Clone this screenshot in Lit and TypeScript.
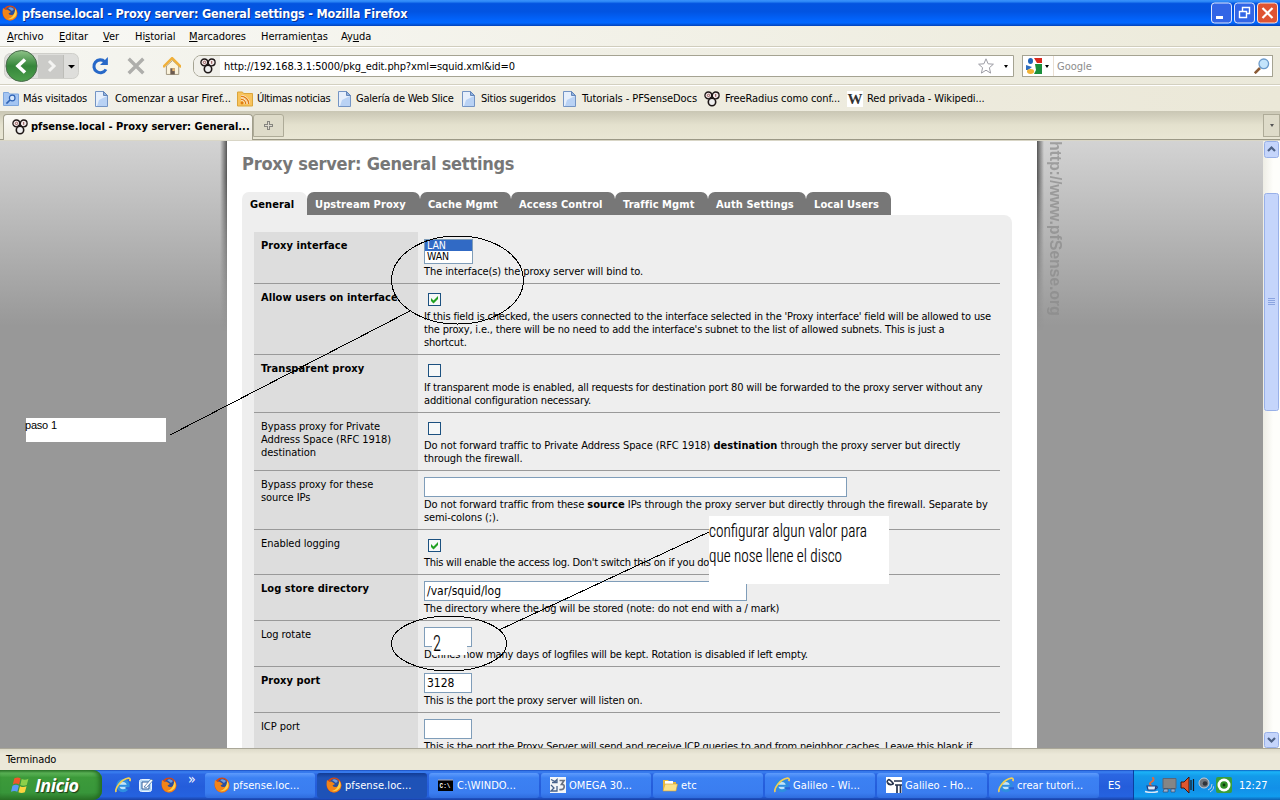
import {LitElement, css, html, svg, nothing} from 'lit';
import {customElement, property} from 'lit/decorators.js';
import {classMap} from 'lit/directives/class-map.js';

const icons: Record<string, unknown> = {
  firefox: svg`
    <circle cx="8" cy="8" r="7.5" fill="#d9480f"/>
    <circle cx="8.4" cy="6.6" r="4.8" fill="#2b4f9e"/>
    <path d="M6 3 Q9 1 12 4 L10 6 Z" fill="#6f9ee0"/>
    <path d="M1 3 L3.5 5 Q5 4 6.5 5.2 L9 7 L6.5 8.5 Q8 11 11.5 9.5 Q14 7.5 13 3 Q17 8 14 12.5 Q10 17 4.5 14.5 Q-.5 11 1 3Z" fill="#f28418"/>
    <path d="M13.4 4 Q15.8 8 13.4 11.6 Q10.5 15 6 14 Q12 13 13.4 4Z" fill="#fcd14a"/>`,
  pf: svg`
    <circle cx="4.3" cy="4.4" r="3.4" fill="#f3e9e9" stroke="#1d1616" stroke-width="1.3"/>
    <circle cx="11.7" cy="4.4" r="3.4" fill="#f3e9e9" stroke="#1d1616" stroke-width="1.3"/>
    <circle cx="8" cy="11" r="3.7" fill="#efefef" stroke="#1d1616" stroke-width="1.6"/>
    <circle cx="4.5" cy="4.4" r="1.2" fill="none" stroke="#8d4f4f" stroke-width=".9"/>
    <path d="M11.7 3v2.800" stroke="#8d4f4f"/>
    <path d="M6.4 7.2h3.2" stroke="#1d1616" stroke-width="1.4"/>`,
  page: svg`
    <path d="M1.5 .5h8l4 4v11h-12z" fill="#e6effb" stroke="#7394c4"/>
    <path d="M5 9l8-4v10H3z" fill="#b9d2f4"/>
    <path d="M9.5 .5v4h4z" fill="#8fb2e2" stroke="#6486b8"/>`,
  places: svg`
    <path d="M.5 1.500h5l1 1.500h9v11.500H.5z" fill="#a4c5f2" stroke="#7da6dd"/>
    <circle cx="9.2" cy="7" r="2.8" fill="#d8e8fb" stroke="#2f63b4" stroke-width="1.2"/>
    <path d="M7 9l-3.6 3.6" stroke="#2f63b4" stroke-width="1.6"/>`,
  rss: svg`
    <path d="M.5 1h5l1 1.500h9v12.500H.5z" fill="#f8c35c" stroke="#dba53a"/>
    <circle cx="5" cy="12" r="1.4" fill="#e07b12"/>
    <path d="M4 8.3a4.7 4.7 0 0 1 4.7 4.7M4 5.2a7.8 7.8 0 0 1 7.8 7.8" fill="none" stroke="#fff" stroke-width="2.400"/>
    <path d="M4 8.3a4.7 4.7 0 0 1 4.7 4.7M4 5.2a7.8 7.8 0 0 1 7.8 7.8" fill="none" stroke="#e07b12" stroke-width="1.500"/>`,
  wiki: svg`
    <rect width="16" height="16" fill="#fff"/>
    <text x="8" y="13.4" text-anchor="middle" font-family="Liberation Serif, serif" font-weight="bold" font-size="15" fill="#333">W</text>`,
  ie: svg`
    <circle cx="8" cy="8.6" r="5.2" fill="#bfe3fa" stroke="#2f8ee0" stroke-width="3"/>
    <path d="M4 8.8h9" stroke="#2f8ee0" stroke-width="2"/>
    <path d="M10 10.200h6v2.300h-4z" fill="#2a62d6"/>
    <path d="M1.2 15C-.6 12 6 2 13.5 1.2c2-.1 2 1.6 1.2 3" fill="none" stroke="#f3cf52" stroke-width="1.700"/>`,
  note: svg`
    <rect x="1.5" y="2.5" width="12" height="12" rx="2" fill="#b7d9f5" stroke="#e8f4ff"/>
    <path d="M4 5h7v7H4z" fill="#fff" stroke="#315f99"/>
    <path d="M6 10l7-8 2 1.5-6.5 7z" fill="#fff" stroke="#3f71a9" stroke-width=".8"/>`,
  cmd: svg`
    <rect y="3" width="15" height="11" fill="#000"/>
    <path d="M0 3h15" stroke="#aab"/>
    <text x="1.5" y="11" textLength="11" lengthAdjust="spacingAndGlyphs" font-family="Liberation Mono, monospace" font-weight="bold" font-size="7" fill="#fff">C:\\</text>`,
  omega: svg`
    <rect width="16" height="16" fill="#f4f6f8"/>
    <path d="M1 2.500l4 2 2-2v3H2M1 8l3 3-3 3h6V9" fill="none" stroke="#47628a" stroke-width="1.3"/>
    <path d="M9.500 3.500h4.500l-2.500 3.800q3.200 0 2.600 3-.6 3-4.800 2.200" fill="none" stroke="#6a7280" stroke-width="1.700"/>`,
  folder: svg`
    <path d="M1 3h5l1.5 2H14v9H1z" fill="#e9b93d"/>
    <path d="M3 4h8v3H3z" fill="#fff"/>
    <path d="M3 7h12.5L14 14H1z" fill="#fbe28a" stroke="#d59f2c" stroke-width=".6"/>`,
  galileo: svg`
    <rect width="16" height="16" fill="#fff"/>
    <path d="M1 5q1-4 4-1t2 3q-4 2-6-2M8 4h8M9 8h7M11 8v8M14.5 8v8" fill="none" stroke="#26334d" stroke-width="1.7"/>`,
  java: svg`
    <path d="M8.5 0Q11 3 7.5 5T8 9" fill="none" stroke="#e06a3f" stroke-width="2"/>
    <path d="M3 9h9l-1 4H4zM12 9.500q3 .5-.5 2.500" fill="#dfe8f6" stroke="#1c3f84" stroke-width="1.2"/>
    <path d="M1 14.500q6.500 2 13 0" fill="none" stroke="#dfe8f6" stroke-width="1.4"/>`,
  net: svg`
    <path d="M1 1.500h13v10H1z" fill="#858585" stroke="#5b6574"/>
    <path d="M2 12h4v3H1zM9 12h4v3H9z" fill="#9bb0cf" stroke="#33415c" stroke-width=".6"/>`,
  sound: svg`
    <path d="M1 5h3l5-5v16L4 11H1z" fill="#e0562e" stroke="#42160d"/>
    <path d="M11 3v10M13.500 2v12" stroke="#15181f" stroke-width="1.2"/>`,
  speaker: svg`
    <circle cx="6" cy="6" r="5" fill="#6f757d" stroke="#c9ced5"/>
    <circle cx="7" cy="6.500" r="2.300" fill="#30343a"/>
    <path d="M10 13q4-1 4-6M12 15q4-2 4-6" fill="none" stroke="#b8cfe8"/>`,
  eye: svg`
    <rect width="16" height="16" rx="2" fill="#3a9e3a"/>
    <circle cx="8" cy="8" r="6.500" fill="#fff"/>
    <circle cx="8" cy="8" r="3.800" fill="#2f8f24"/>
    <circle cx="8" cy="8" r="1.400" fill="#0c3a0c"/>`,
  reload: svg`
    <path d="M12.300 4.200A5.700 5.700 0 1 0 13.300 11" fill="none" stroke="#2768c8" stroke-width="2.700"/>
    <path d="M15 0v7H8z" fill="#2768c8"/>`,
  stop: svg`<path d="M1.500 1.500l13 13M14.500 1.500l-13 13" stroke="#aeaeab" stroke-width="3"/>`,
  home: svg`
    <path d="M3 8v7.500h11V8L8.500 3z" fill="#fbf3dc" stroke="#9a8f77" stroke-width=".8"/>
    <path d="M.5 9L8.500 1l8 8" transform="translate(-.4)" fill="none" stroke="#f0b03a" stroke-width="2.200"/>
    <path d="M6.500 10h4v5.500h-4z" fill="#6c5b50"/>
    <path d="M8.300 10h2.200v2.500H8.300z" fill="#e9b872"/>`,
  google: svg`
    <rect width="16" height="16" fill="#fff"/>
    <path d="M8 0h8v5h-5z" fill="#d8281c"/>
    <path d="M9 6h7v10H8l2-4z" fill="#1a8f3b"/>
    <ellipse cx="4.500" cy="3" rx="2.500" ry="3" fill="#1f63b8"/>
    <path d="M0 7l6 2-4 3H0z" fill="#2f6ebf"/>
    <ellipse cx="4.500" cy="13.500" rx="3.500" ry="2.400" fill="#f2b233"/>`,
  magnifier: svg`
    <path d="M6 10L.8 15.200" stroke="#8a5a35" stroke-width="2.600"/>
    <circle cx="9.800" cy="5.800" r="4.800" fill="#c4e4fb" stroke="#6c9bcb" stroke-width="1.300"/>`,
  star: svg`<path d="M8 .8l2.100 5 5.300.4-4 3.500 1.200 5.400L8 12.200l-4.600 2.900 1.200-5.400-4-3.500 5.300-.4z" fill="#fff" stroke="#9c9ca4"/>`,
  windows: svg`
    <path d="M3 2q3-1.500 5.500 0L7.200 7.500Q4.500 6 1.600 7.500z" fill="#f0562b"/>
    <path d="M9.500 2.600q3 1.400 6-.2L14 8q-3 1.400-5.700 0z" fill="#8cd04a"/>
    <path d="M1.300 8.600q3-1.500 5.700 0L5.600 14Q3 12.500 0 14z" fill="#5a9bf6"/>
    <path d="M8 9q3 1.500 5.800.1L12.300 14.500q-3 1.400-5.700 0z" fill="#fbd440"/>`,
};

@customElement('ui-icon')
export class UiIcon extends LitElement {
  @property() name = '';
  @property({type: Number}) size = 16;

  static styles = css`
    :host {
      display: inline-block;
      flex: none;
      line-height: 0;
    }
  `;

  render() {
    return html`<svg width=${this.size} height=${this.size} viewBox="0 0 16 16">
      ${icons[this.name]}
    </svg>`;
  }
}

interface Row {
  label: string;
  bold?: boolean;
  spacing?: 'loose' | 'tight';
  control: 'select' | 'check' | 'input';
  checked?: boolean;
  size?: string;
  value?: string;
  lines: unknown[];
}

const rows: Row[] = [
  {
    label: 'Proxy interface',
    bold: true,
    spacing: 'loose',
    control: 'select',
    lines: ['The interface(s) the proxy server will bind to.'],
  },
  {
    label: 'Allow users on interface',
    bold: true,
    control: 'check',
    checked: true,
    lines: [
      "If this field is checked, the users connected to the interface selected in the 'Proxy interface' field will be allowed to use",
      "the proxy, i.e., there will be no need to add the interface's subnet to the list of allowed subnets. This is just a",
      'shortcut.',
    ],
  },
  {
    label: 'Transparent proxy',
    bold: true,
    control: 'check',
    lines: [
      'If transparent mode is enabled, all requests for destination port 80 will be forwarded to the proxy server without any',
      'additional configuration necessary.',
    ],
  },
  {
    label: 'Bypass proxy for Private\nAddress Space (RFC 1918)\ndestination',
    spacing: 'loose',
    control: 'check',
    lines: [
      html`Do not forward traffic to Private Address Space (RFC 1918)
        <b>destination</b> through the proxy server but directly`,
      'through the firewall.',
    ],
  },
  {
    label: 'Bypass proxy for these\nsource IPs',
    spacing: 'loose',
    control: 'input',
    size: 'long',
    lines: [
      html`Do not forward traffic from these <b>source</b> IPs through the proxy
        server but directly through the firewall. Separate by`,
      'semi-colons (;).',
    ],
  },
  {
    label: 'Enabled logging',
    spacing: 'tight',
    control: 'check',
    checked: true,
    lines: ["This will enable the access log. Don't switch this on if you do"],
  },
  {
    label: 'Log store directory',
    bold: true,
    control: 'input',
    size: 'medium',
    value: '/var/squid/log',
    lines: [
      'The directory where the log will be stored (note: do not end with a / mark)',
    ],
  },
  {
    label: 'Log rotate',
    control: 'input',
    lines: [
      'Defines how many days of logfiles will be kept. Rotation is disabled if left empty.',
    ],
  },
  {
    label: 'Proxy port',
    bold: true,
    control: 'input',
    value: '3128',
    lines: ['This is the port the proxy server will listen on.'],
  },
  {
    label: 'ICP port',
    control: 'input',
    lines: [
      'This is the port the Proxy Server will send and receive ICP queries to and from neighbor caches. Leave this blank if',
    ],
  },
];

@customElement('settings-page')
export class SettingsPage extends LitElement {
  static styles = css`
    :host {
      display: block;
      width: 770px;
      padding: 13px 25px 0 15px;
      background: #fff;
      color: #000;
      font-size: 11px;
      line-height: 13px;
    }

    h1 {
      margin: 0;
      height: 38px;
      font-size: 18px;
      line-height: 20px;
      letter-spacing: -0.23px;
      color: #777;
    }

    .tabs {
      display: flex;
      font-weight: bold;
      letter-spacing: 0.09px;
    }

    .tab {
      box-sizing: border-box;
      height: 23px;
      padding: 6px 0 0 8px;
      border-radius: 7px 7px 0 0;
      background: #777;
      color: #fff;
    }

    .tab.active {
      background: #eee;
      color: #000;
    }

    .t1 { width: 65px; }
    .t2 { width: 113px; }
    .t3 { width: 91px; }
    .t4 { width: 104px; }
    .t5 { width: 93px; }
    .t6 { width: 98px; }
    .t7 { width: 85px; }

    .panel {
      box-sizing: border-box;
      height: 560px;
      padding: 17px 12px 0;
      border-radius: 0 8px 0 0;
      background: #eee;
    }

    .row {
      display: grid;
      grid-template-columns: 164px 1fr;
      border-bottom: 1px solid #999;
    }

    .label {
      padding: 7px 0 0 7px;
      background: #ddd;
      letter-spacing: -0.05px;
      white-space: pre;
    }

    .label.bold {
      font-weight: bold;
      letter-spacing: 0.06px;
    }

    .field {
      padding: 6px 0 5px 6px;
      letter-spacing: -0.17px;
    }

    .field.loose {
      letter-spacing: -0.09px;
    }

    .field.tight {
      letter-spacing: -0.25px;
    }

    .field b {
      letter-spacing: 0.05px;
    }

    .select {
      box-sizing: border-box;
      width: 49px;
      height: 25px;
      margin: 1px 0;
      border: 1px solid #7f9db9;
      background: #fff;
      font-size: 10.5px;
      line-height: 11px;
    }

    .option {
      padding-left: 2px;
    }

    .option.selected {
      background: #316ac5;
      color: #fff;
    }

    .check {
      display: block;
      margin: 3px 4px 4px;
    }

    .input {
      box-sizing: border-box;
      width: 48px;
      height: 20px;
      margin-bottom: 1px;
      padding: 3px 2px;
      border: 1px solid #7f9db9;
      background: #fff;
      font-size: 12px;
      letter-spacing: 0;
    }

    .input.long {
      width: 423px;
    }

    .input.medium {
      width: 323px;
    }
  `;

  control(row: Row) {
    if (row.control === 'select') {
      return html`<div class="select">
        <div class="option selected">LAN</div>
        <div class="option">WAN</div>
      </div>`;
    }
    if (row.control === 'check') {
      return html`<svg class="check" width="13" height="13">
        <rect x=".5" y=".5" width="12" height="12" fill="#f6f8f8" stroke="#1c5180" />
        ${row.checked
          ? svg`<path d="M3 5v3l2.500 2.500L10 6V3L5.500 7.500z" fill="#21a121"/>`
          : nothing}
      </svg>`;
    }
    return html`<div class="input ${row.size ?? ''}">${row.value ?? ''}</div>`;
  }

  render() {
    const tabs = [
      'General',
      'Upstream Proxy',
      'Cache Mgmt',
      'Access Control',
      'Traffic Mgmt',
      'Auth Settings',
      'Local Users',
    ];
    return html`
      <h1>Proxy server: General settings</h1>
      <div class="tabs">
        ${tabs.map(
          (t, i) =>
            html`<div class="tab t${i + 1} ${i === 0 ? 'active' : ''}">${t}</div>`
        )}
      </div>
      <div class="panel">
        ${rows.map(
          (row) => html`<div class="row">
            <div class=${classMap({label: true, bold: !!row.bold})}>${row.label}</div>
            <div class="field ${row.spacing ?? ''}">
              ${this.control(row)}
              ${row.lines.map((l) => html`<div class="line">${l}</div>`)}
            </div>
          </div>`
        )}
      </div>
    `;
  }
}

@customElement('app-root')
export class AppRoot extends LitElement {
  static styles = css`
    :host {
      display: flex;
      flex-direction: column;
      position: relative;
      width: 1280px;
      height: 800px;
      overflow: hidden;
      font-family: 'DejaVu Sans Condensed', 'DejaVu Sans', sans-serif;
      font-stretch: condensed;
      font-size: 11px;
      line-height: 13px;
      color: #000;
      background: #ece9d8;
      white-space: nowrap;
    }

    .row {
      display: flex;
      align-items: center;
      box-sizing: border-box;
      flex: none;
    }

    .titlebar {
      height: 26px;
      padding: 0 1px 0 2px;
      gap: 4px;
      background: linear-gradient(#3b93fb 0, #2b86f6 6%, #0354e0 14%, #0254e2 45%, #0263fb 75%, #0268ff 88%, #0342b8 100%);
    }

    .title {
      flex: 1;
      font-size: 12.5px;
      font-weight: bold;
      letter-spacing: -0.16px;
      color: #fff;
      text-shadow: 1px 1px 0 #0a2f8c;
    }

    .winbtn {
      display: block;
      margin-left: -2px;
    }

    .menubar {
      height: 21px;
      padding-left: 7px;
      border-bottom: 1px solid #d0cdbd;
      background: linear-gradient(90deg, #f8f8f5, #eceada);
      letter-spacing: -0.05px;
    }

    .m1 { width: 52px; }
    .m2 { width: 44px; }
    .m3 { width: 32px; }
    .m4 { width: 54px; }
    .m5 { width: 72px; }
    .m6 { width: 80px; }

    .navbar {
      height: 38px;
      padding-left: 4px;
      border-top: 1px solid #fff;
      border-bottom: 1px solid #d3d0c0;
      background: linear-gradient(90deg, #f5f5f0, #ebe9da);
    }

    .back {
      width: 78px;
      margin-right: 9px;
    }

    .reload { margin-right: 18px; }
    .stop { margin-right: 18px; }
    .home { margin-right: 12px; }

    .urlbar,
    .search {
      height: 22px;
      border: 1px solid #a5a392;
      background: #fff;
    }

    .urlbar {
      width: 821px;
      border-radius: 8px 0 0 8px;
      overflow: hidden;
    }

    .favicon {
      width: 26px;
      height: 20px;
      margin-right: 4px;
      padding-left: 6px;
      background: #f1f0ea;
    }

    .url {
      flex: 1;
      letter-spacing: -0.12px;
    }

    .arrow {
      width: 0;
      height: 0;
      border: 2.5px solid transparent;
      border-top: 3px solid #000;
      border-bottom: 0;
    }

    .urlbar .arrow {
      margin: 0 5px 0 10px;
    }

    .search {
      width: 251px;
      margin-left: 8px;
      padding: 0 2px 0 3px;
    }

    .engine {
      width: 28px;
      height: 20px;
      margin-right: 3px;
      gap: 3px;
      border-right: 1px solid #eadfd2;
    }

    .hint {
      flex: 1;
      color: #8c8c8c;
    }

    .bookmarks {
      height: 26px;
      padding: 0 0 0 3px;
      border-top: 1px solid #fff;
      background: linear-gradient(90deg, #f2f1ea, #ebe8d8);
      letter-spacing: -0.13px;
    }

    .bookmark {
      gap: 4px;
    }

    .b0 { width: 91px; letter-spacing: -0.22px; }
    .b1 { width: 143px; gap: 5px; letter-spacing: -0.05px; }
    .b2 { width: 100px; letter-spacing: -0.36px; }
    .b3 { width: 124px; gap: 3px; letter-spacing: -0.22px; }
    .b4 { width: 101px; letter-spacing: -0.22px; }
    .b5 { width: 142px; letter-spacing: -0.08px; }
    .b6 { width: 143px; gap: 5px; letter-spacing: -0.1px; }

    .tabstrip {
      height: 29px;
      padding: 3px 0 0 3px;
      align-items: flex-start;
      border-bottom: 1px solid #9b9886;
      background: linear-gradient(#c9c6b4, #e4e1ce 50%, #e9e6d5);
    }

    .browser-tab {
      width: 250px;
      height: 26px;
      padding: 0 0 2px 8px;
      gap: 3px;
      border: 1px solid #a19e8c;
      border-bottom: 0;
      border-radius: 4px 4px 0 0;
      background: linear-gradient(#fbfaf7, #edeadd);
      font-weight: bold;
      letter-spacing: 0.03px;
    }

    .new-tab {
      width: 31px;
      height: 23px;
      justify-content: center;
      border: 1px solid #aeab98;
      border-radius: 3px 3px 0 0;
      background: #dedbc9;
    }

    .all-tabs {
      width: 17px;
      height: 23px;
      margin-left: auto;
      justify-content: center;
      border: 1px solid #aeab98;
      background: #dedbc9;
    }

    .all-tabs .arrow {
      border-top-color: #555;
    }

    .viewport {
      display: flex;
      flex: none;
      height: 608px;
      overflow: hidden;
      border-top: 1px solid #d9d6c6;
      box-sizing: border-box;
      background: linear-gradient(#d3d3d3, #989898 185px);
    }

    .edge {
      width: 227px;
    }

    .edge-fade {
      width: 7px;
      height: 190px;
      margin-left: 220px;
      background: linear-gradient(90deg, transparent, #555);
      -webkit-mask-image: linear-gradient(#000 20%, transparent);
      mask-image: linear-gradient(#000 20%, transparent);
    }

    .side {
      display: flex;
      flex: 1;
    }

    .side .edge-fade {
      margin-left: 0;
      background: linear-gradient(270deg, transparent, #555);
    }

    .watermark {
      writing-mode: vertical-rl;
      margin-left: 2px;
      font: bold 16px/18px 'Liberation Sans', sans-serif;
      color: #8a8a8a;
      opacity: 0.7;
      letter-spacing: -0.16px;
    }

    .scrollbar {
      width: 17px;
      height: 607px;
      background: linear-gradient(90deg, #eeede5, #fefefb 60%);
    }

    .status {
      height: 22px;
      padding-left: 6px;
      border-top: 1px solid #aaa798;
      background: linear-gradient(#dedbc9, #ebe8d8 25%, #ebe8d8);
      letter-spacing: -0.1px;
    }

    .taskbar {
      height: 30px;
      background: linear-gradient(#1a4cc0 0, #3b81f2 6%, #2b66e2 15%, #245ddb 55%, #2562df 88%, #1941a5 100%);
      color: #fff;
    }

    .start {
      width: 102px;
      height: 30px;
      padding-left: 11px;
      gap: 6px;
      border-radius: 0 9px 9px 0;
      background: linear-gradient(#2f7a2e 0, #5cb457 10%, #3c9a3a 25%, #38963a 75%, #2b7428 100%);
      box-shadow: inset -3px 0 4px #246b22;
    }

    .start-label {
      font: italic bold 18px/24px 'Open Sans', sans-serif;
      letter-spacing: -0.5px;
      text-shadow: 1px 1px 1px #1c3a16;
    }

    .quick {
      width: 103px;
      padding-left: 13px;
      gap: 7px;
    }

    .chevrons {
      margin: -12px 0 0 4px;
      font-size: 14px;
    }

    .tasks {
      gap: 2px;
      letter-spacing: 0.08px;
    }

    .task {
      width: 110px;
      height: 25px;
      padding-left: 9px;
      gap: 3px;
      border-radius: 3px;
      background: linear-gradient(#5d9bfc, #3c81f3 20%, #3a7df0 80%, #2f6cdd);
    }

    .task.active {
      background: linear-gradient(#123c95, #1e52b7 20%, #1e52b7);
    }

    .lang {
      width: 34px;
      height: 30px;
      padding-left: 9px;
    }

    .tray {
      flex: 1;
      height: 30px;
      padding-left: 10px;
      gap: 2px;
      border-left: 1px solid #0b3f9f;
      background: linear-gradient(#0c5fc0 0, #1bb4f8 6%, #139bea 20%, #1290e8 60%, #119cef 88%, #0c62b4 100%);
    }

    .clock {
      margin-left: 5px;
    }

    .annotations {
      position: absolute;
      top: 0;
      left: 0;
      pointer-events: none;
    }
  `;

  windowButtons() {
    return html`<svg class="winbtn" width="68" height="22" viewBox="0 0 68 22">
      <rect x=".5" y="1" width="20" height="20" rx="3" fill="#3265e6" stroke="#dfe8fd" />
      <rect x="23.5" y="1" width="20" height="20" rx="3" fill="#3265e6" stroke="#dfe8fd" />
      <rect x="46.5" y="1" width="20" height="20" rx="3" fill="#df5433" stroke="#fbe4dd" />
      <path d="M5 15.500h7" stroke="#fff" stroke-width="3" />
      <path d="M28.500 9.500h7v6h-7zM31.500 9V5.500h7v6H36" fill="none" stroke="#fff" stroke-width="1.400" />
      <path d="M51.500 6l10 10M61.500 6l-10 10" stroke="#fff" stroke-width="2.200" />
    </svg>`;
  }

  backForward() {
    return html`<svg class="back" width="78" height="34" viewBox="0 0 78 34">
      <defs>
        <linearGradient id="green" x2="0" y2="1">
          <stop offset="0" stop-color="#8fc389" />
          <stop offset=".5" stop-color="#35863a" />
          <stop offset="1" stop-color="#4da04c" />
        </linearGradient>
      </defs>
      <rect x=".5" y="4.500" width="74" height="25" rx="6" fill="#dededb" stroke="#cfcfca" />
      <path d="M34 6h25v23H34z" fill="#cbcbc8" />
      <path d="M59.500 6v23" stroke="#bdbdb8" />
      <path d="M45 12l5 5-5 5" fill="none" stroke="#f4f4f2" stroke-width="3" />
      <path d="M64 16h7l-3.500 3.500z" fill="#000" />
      <circle cx="17.500" cy="17" r="15.500" fill="url(#green)" stroke="#4a6b4c" />
      <path d="M21 10.500L14 17l7 6.500" fill="none" stroke="#fff" stroke-width="3.600" />
    </svg>`;
  }

  scrollbar() {
    return html`<svg class="scrollbar" width="17" height="607">
      <g fill="#c5d5fb" stroke="#98b0e8">
        <rect x="1.500" y=".5" width="14" height="16" rx="2" />
        <rect x="1.500" y="52.500" width="14" height="217" rx="2" />
        <rect x="1.500" y="591.500" width="14" height="15" rx="2" />
      </g>
      <path d="M5 10l3.500-3.500L12 10M5 597l3.500 3.500L12 597" fill="none" stroke="#4d6185" stroke-width="2.200" />
      <path d="M5 157.500h7M5 159.500h7M5 161.500h7M5 163.500h7" stroke="#8ba4e0" />
    </svg>`;
  }

  annotations() {
    return html`<svg class="annotations" width="1280" height="800">
      <rect x="26" y="418" width="140" height="24" fill="#fff" />
      <text x="25" y="429" textLength="32" font-family="Liberation Sans, sans-serif" font-size="11">paso 1</text>
      <rect x="432" y="634" width="35" height="21" fill="#fff" />
      <g fill="none" stroke="#000" shape-rendering="crispEdges">
        <ellipse cx="457.500" cy="280" rx="66" ry="44" />
        <path d="M410 311L170 435" />
        <ellipse cx="449" cy="643.500" rx="57.500" ry="27.500" />
        <path d="M499 630L709 532" />
      </g>
      <rect x="709" y="516" width="180" height="68" fill="#fff" />
      <g font-family="Roboto, sans-serif" font-weight="300" font-size="19" stroke="#000" stroke-width=".15">
        <text x="433" y="651" textLength="8" lengthAdjust="spacingAndGlyphs" font-size="22">2</text>
        <text x="709" y="537" textLength="158" lengthAdjust="spacingAndGlyphs">configurar algun valor para</text>
        <text x="709" y="562" textLength="133" lengthAdjust="spacingAndGlyphs">que nose llene el disco</text>
      </g>
    </svg>`;
  }

  render() {
    const bookmarks = [
      ['places', 'Más visitados'],
      ['page', 'Comenzar a usar Firef...'],
      ['rss', 'Últimas noticias'],
      ['page', 'Galería de Web Slice'],
      ['page', 'Sitios sugeridos'],
      ['page', 'Tutorials - PFSenseDocs'],
      ['pf', 'FreeRadius como conf...'],
      ['wiki', 'Red privada - Wikipedi...'],
    ];
    const tasks = [
      ['firefox', 'pfsense.loc...'],
      ['firefox', 'pfsense.loc...'],
      ['cmd', 'C:\\WINDO...'],
      ['omega', 'OMEGA 30...'],
      ['folder', 'etc'],
      ['ie', 'Galileo - Wi...'],
      ['galileo', 'Galileo - Ho...'],
      ['ie', 'crear tutori...'],
    ];
    return html`
      <div class="row titlebar">
        <ui-icon name="firefox"></ui-icon>
        <div class="title">
          pfsense.local - Proxy server: General settings - Mozilla Firefox
        </div>
        ${this.windowButtons()}
      </div>
      <div class="row menubar">
        <span class="m1"><u>A</u>rchivo</span>
        <span class="m2"><u>E</u>ditar</span>
        <span class="m3"><u>V</u>er</span>
        <span class="m4">Hi<u>s</u>torial</span>
        <span class="m5"><u>M</u>arcadores</span>
        <span class="m6">Herramien<u>t</u>as</span>
        <span>Ay<u>u</u>da</span>
      </div>
      <div class="row navbar">
        ${this.backForward()}
        <ui-icon class="reload" name="reload" size="18"></ui-icon>
        <ui-icon class="stop" name="stop" size="18"></ui-icon>
        <ui-icon class="home" name="home" size="18"></ui-icon>
        <div class="row urlbar">
          <div class="row favicon"><ui-icon name="pf"></ui-icon></div>
          <span class="url">http://192.168.3.1:5000/pkg_edit.php?xml=squid.xml&amp;id=0</span>
          <ui-icon name="star"></ui-icon>
          <div class="arrow"></div>
        </div>
        <div class="row search">
          <div class="row engine">
            <ui-icon name="google"></ui-icon>
            <div class="arrow"></div>
          </div>
          <span class="hint">Google</span>
          <ui-icon name="magnifier"></ui-icon>
        </div>
      </div>
      <div class="row bookmarks">
        ${bookmarks.map(
          ([icon, label], i) =>
            html`<div class="row bookmark b${i}">
              <ui-icon name=${icon}></ui-icon><span>${label}</span>
            </div>`
        )}
      </div>
      <div class="row tabstrip">
        <div class="row browser-tab">
          <ui-icon name="pf"></ui-icon>
          <span>pfsense.local - Proxy server: General...</span>
        </div>
        <div class="row new-tab">
          <svg width="9" height="9">
            <path d="M4.500 0v9M0 4.500h9" stroke="#86857f" stroke-width="3" />
            <path d="M4.500 1v7M1 4.500h7" stroke="#dedbd0" />
          </svg>
        </div>
        <div class="row all-tabs"><div class="arrow"></div></div>
      </div>
      <div class="viewport">
        <div class="edge"><div class="edge-fade"></div></div>
        <settings-page></settings-page>
        <div class="side">
          <div class="edge-fade"></div>
          <div class="watermark">http://www.pfSense.org</div>
        </div>
        ${this.scrollbar()}
      </div>
      <div class="row status">Terminado</div>
      <div class="row taskbar">
        <div class="row start">
          <ui-icon name="windows" size="18"></ui-icon>
          <span class="start-label">Inicio</span>
        </div>
        <div class="row quick">
          <ui-icon name="ie"></ui-icon>
          <ui-icon name="note"></ui-icon>
          <ui-icon name="firefox"></ui-icon>
          <span class="chevrons">»</span>
        </div>
        <div class="row tasks">
          ${tasks.map(
            ([icon, label], i) =>
              html`<div class="row task ${i === 1 ? 'active' : ''}">
                <ui-icon name=${icon}></ui-icon><span>${label}</span>
              </div>`
          )}
        </div>
        <div class="row lang">ES</div>
        <div class="row tray">
          <ui-icon name="java"></ui-icon>
          <ui-icon name="net"></ui-icon>
          <ui-icon name="sound"></ui-icon>
          <ui-icon name="speaker"></ui-icon>
          <ui-icon name="eye"></ui-icon>
          <span class="clock">12:27</span>
        </div>
      </div>
      ${this.annotations()}
    `;
  }
}
